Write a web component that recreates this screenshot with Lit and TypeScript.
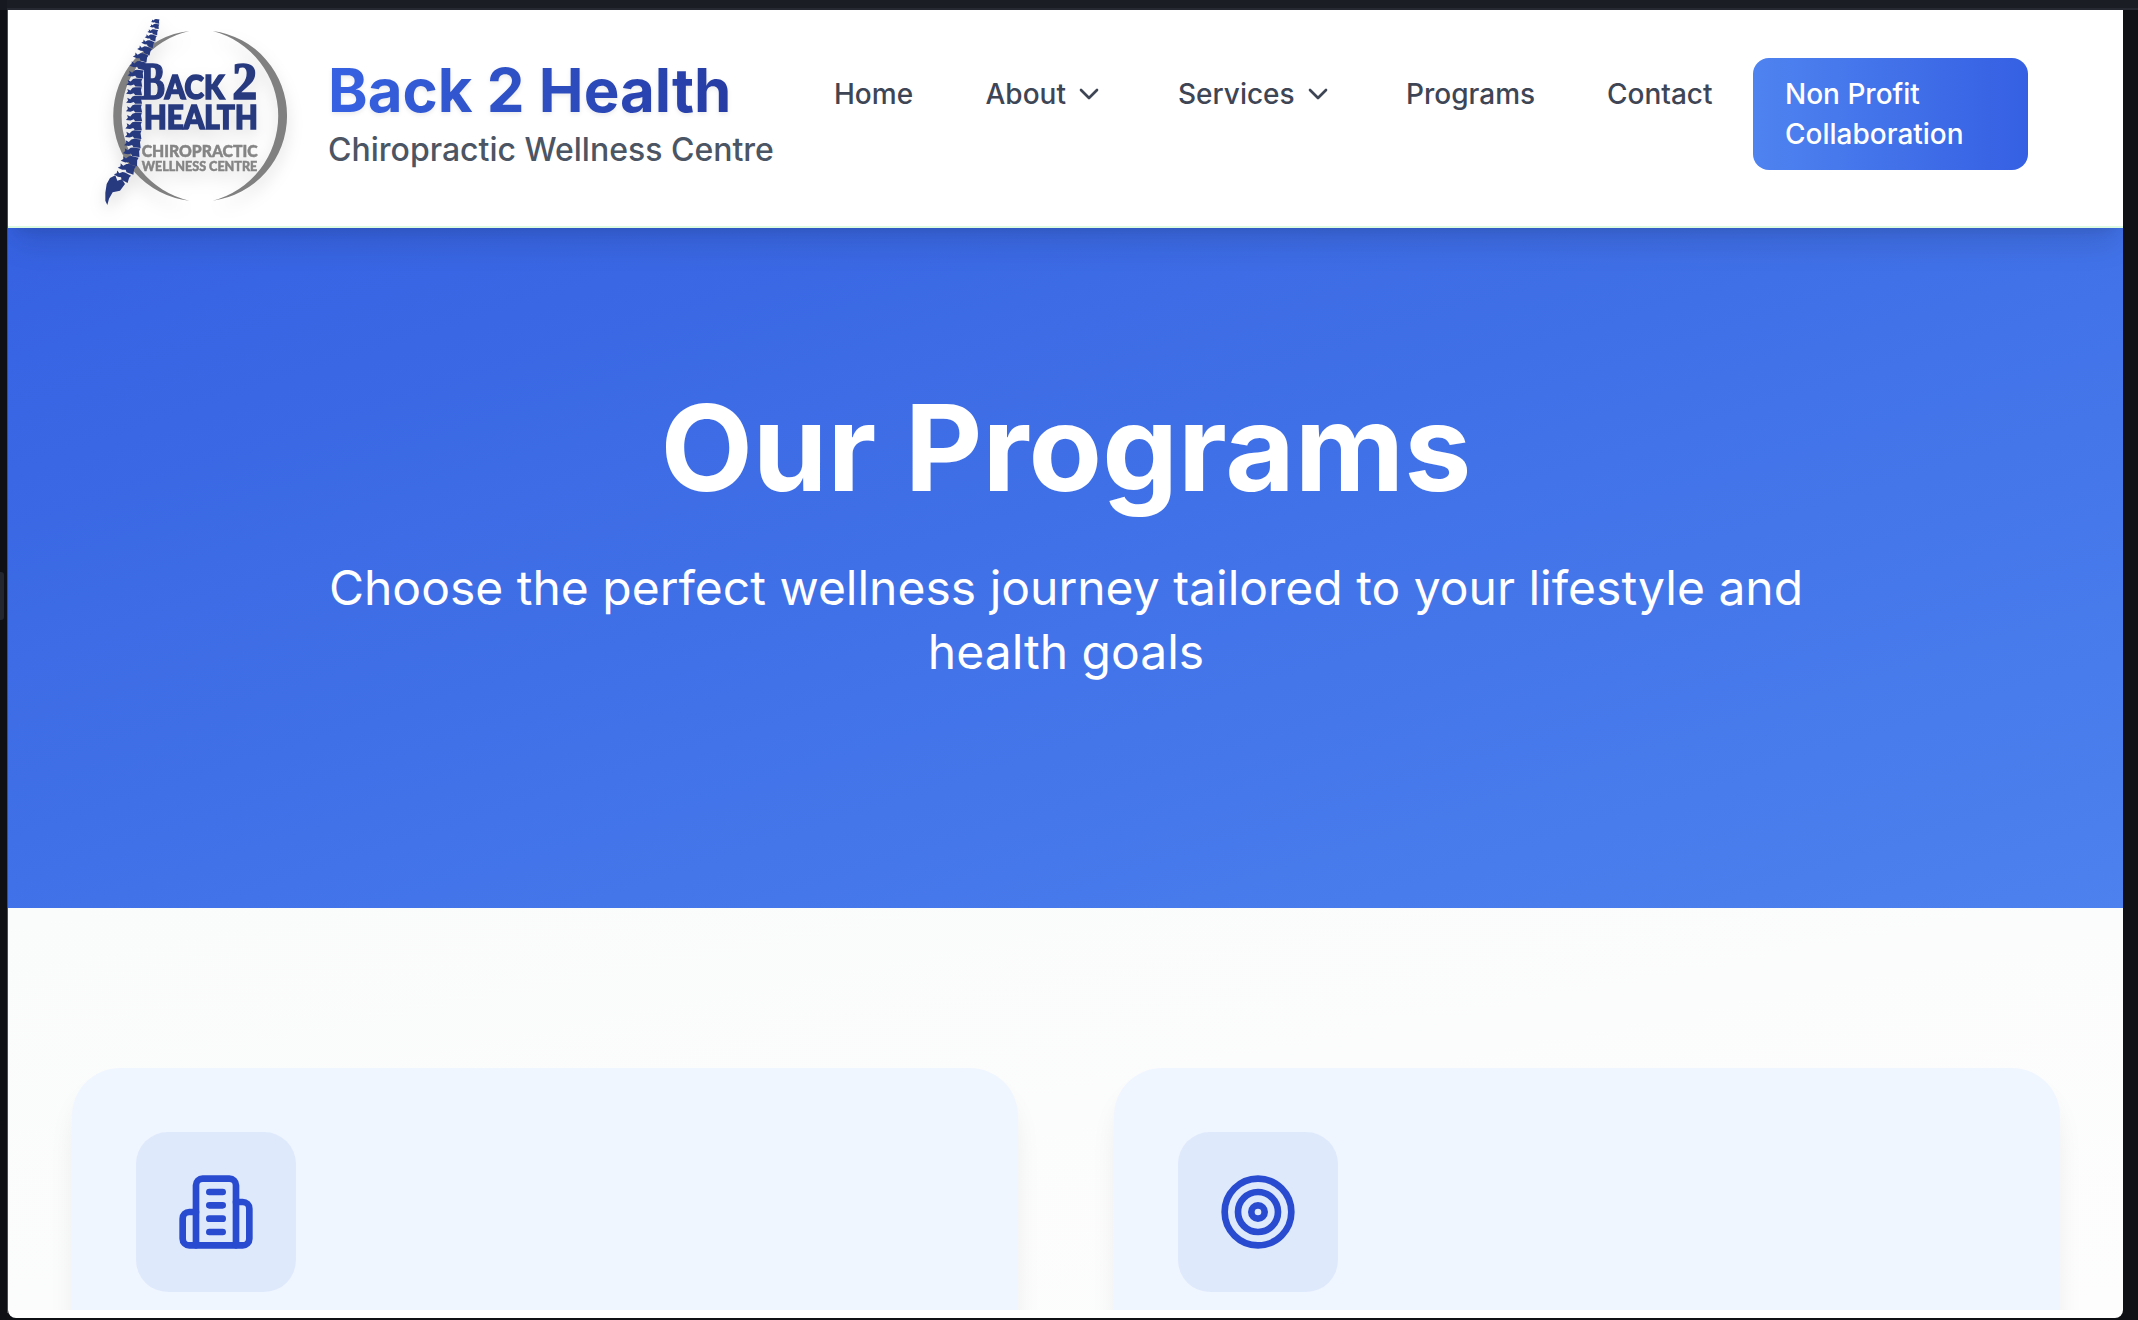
import { LitElement, html, css, svg } from "lit";
import { customElement } from "lit/decorators.js";

// x, y, rotation, scale of each vertebra, from the neck down
const vertebrae: [number, number, number, number][] = [
  [199, 64, 8, 0.6], [197, 79, 10, 0.66], [192, 96, 14, 0.74], [186, 113, 18, 0.82],
  [178, 131, 22, 0.9], [168, 151, 24, 1], [157, 172, 20, 1.06], [149, 196, 12, 1.12],
  [143, 222, 6, 1.14], [139, 248, 3, 1.14], [138, 274, 1, 1.14], [138, 300, 0, 1.14],
  [138, 326, 0, 1.16], [138, 352, 0, 1.16], [137, 378, 2, 1.18], [136, 404, 3, 1.18],
  [134, 430, 5, 1.2], [131, 456, 9, 1.22], [125, 482, 14, 1.22], [116, 506, 20, 1.22],
  [102, 530, 28, 1.15],
];

@customElement("brand-logo")
export class BrandLogo extends LitElement {
  static styles = css`
    :host { display: block; width: 220px; height: 216px; flex: none; }
    svg { display: block; filter: drop-shadow(0 8px 8px rgba(0, 0, 0, 0.13)); }
    .ring { fill: #808080; }
    .navy { fill: #27397f; }
    .letters { stroke: #27397f; stroke-width: 5; }
    .sans { font-family: Lato, sans-serif; font-weight: 900; }
    .serif { font-family: "Liberation Serif", serif; font-weight: 700; }
    .grey { fill: #858585; stroke: #858585; stroke-width: 1.5; }
  `;
  render() {
    return html`<svg width="220" height="216" viewBox="0 30 660 648">
      <path class="ring" d="M298 93A256 256 0 0 0 298 602A261 261 0 0 1 298 93Z" />
      <path class="ring" d="M368 93A256.7 256.7 0 0 1 368 602A263 263 0 0 0 368 93Z" />
      <g class="navy">
        ${vertebrae.map(
          ([x, y, r, s]) => svg`<path transform="translate(${x} ${y}) rotate(${r}) scale(${s})"
            d="M-9-9L-3-11L15-11L13-4L16 10L-2 10L-6 5L-14 8L-26 7L-21 1L-23-6L-15-2Z"/>`
        )}
        <path d="M46 578L50 552L60 534L76 526L82 542L96 538L105 552L90 572L68 577L57 596L52 615L46 602Z" />
      </g>
      <g class="navy letters">
        <text class="sans" y="297"><tspan class="serif" x="153" font-size="157" textLength="72" lengthAdjust="spacingAndGlyphs">B</tspan><tspan
          x="224" font-size="95" textLength="179" lengthAdjust="spacingAndGlyphs">ACK</tspan><tspan
          class="serif" x="427" font-size="158" textLength="75" lengthAdjust="spacingAndGlyphs">2</tspan></text>
        <text class="sans" x="162" y="387" font-size="96" textLength="341" lengthAdjust="spacingAndGlyphs">HEALTH</text>
      </g>
      <g class="grey sans">
        <text x="155" y="472" font-size="52" textLength="348" lengthAdjust="spacingAndGlyphs">CHIROPRACTIC</text>
        <text x="155" y="514" font-size="41" textLength="347" lengthAdjust="spacingAndGlyphs">WELLNESS CENTRE</text>
      </g>
    </svg>`;
  }
}

@customElement("site-header")
export class SiteHeader extends LitElement {
  static styles = css`
    :host {
      display: flex; box-sizing: border-box; height: 218px; padding-left: 82px;
      background: #fff; border-bottom: 2px solid #dcfbe0; position: relative;
      box-shadow: 0 20px 30px -6px rgba(0, 0, 0, 0.12), 0 8px 12px -8px rgba(0, 0, 0, 0.1);
    }
    .brand { width: 488px; margin-left: 18px; padding-top: 44px; flex: none; }
    .name {
      width: max-content; font-size: 60px; line-height: 72px; font-weight: 700;
      color: transparent; background: linear-gradient(to right, #3662e3, #263ca3);
      -webkit-background-clip: text; background-clip: text;
      filter: drop-shadow(0 2px 2px rgba(0, 0, 0, 0.08));
    }
    .tag { font-size: 32px; line-height: 48px; font-weight: 500; color: #4b5563; white-space: nowrap; }
    nav {
      display: flex; align-items: flex-start; margin-left: 18px; padding-top: 48px;
      font-size: 28px; line-height: 40px; font-weight: 500; color: #3e4554;
    }
    .link { display: flex; align-items: center; height: 40px; padding-top: 16px; flex: none; }
    .home { width: 151.5px; }
    .about { width: 192.5px; }
    .services { width: 228px; }
    .programs { width: 201px; }
    .contact { width: 146px; }
    .chevron { margin-left: 7px; }
    .cta {
      box-sizing: border-box; width: 275px; height: 112px; padding: 16px 32px;
      border-radius: 16px; color: #fff;
      background: linear-gradient(to right, #4f83f0, #3560e3);
    }
  `;
  chevron = () => html`<svg class="chevron" width="32" height="32" viewBox="0 0 24 24" fill="none"
    stroke="currentColor" stroke-width="2" stroke-linecap="round" stroke-linejoin="round"><path d="m6 9 6 6 6-6" /></svg>`;
  render() {
    return html`<brand-logo></brand-logo>
      <div class="brand">
        <div class="name">Back 2 Health</div>
        <div class="tag">Chiropractic Wellness Centre</div>
      </div>
      <nav>
        <a class="link home">Home</a>
        <a class="link about">About${this.chevron()}</a>
        <a class="link services">Services${this.chevron()}</a>
        <a class="link programs">Programs</a>
        <a class="link contact">Contact</a>
        <a class="cta">Non Profit<br />Collaboration</a>
      </nav>`;
  }
}

@customElement("app-root")
export class AppRoot extends LitElement {
  static styles = css`
    :host {
      display: flex; box-sizing: border-box; width: 2138px; height: 1320px; overflow: hidden;
      background: linear-gradient(#1b1d25 0 8px, #272932 8px 10px, #0f1117 10px);
      font-family: Inter, sans-serif;
    }
    .edge { width: 7px; padding-top: 572px; flex: none; background: linear-gradient(#171920 0 10px, #0f1016 10px); }
    .grip { width: 4px; height: 48px; background: #24262f; border-radius: 0 3px 3px 0; }
    .line { width: 1px; margin: 10px 0 7px; background: #4b4d54; flex: none; }
    .page {
      display: flex; flex-direction: column; width: 2115px; height: 1308px; margin-top: 10px;
      background: #fff; border-radius: 0 0 8px 8px; overflow: hidden;
    }
    site-header { z-index: 1; flex: none; }
    .hero {
      box-sizing: border-box; height: 680px; flex: none; padding: 160px 0 0 1px; text-align: center; color: #fff;
      background: linear-gradient(to bottom right, #3662e2, #4c81ee);
    }
    h1 { margin: 0; font-size: 120px; line-height: 120px; font-weight: 700; }
    .lead { margin: 48px auto 0; width: 1536px; font-size: 48px; line-height: 64px; font-weight: 400; }
    .programs {
      box-sizing: border-box; height: 402px; padding: 160px 63px 0 64px; overflow: hidden;
      display: grid; grid-template-columns: 1fr 1fr; gap: 96px;
      background: linear-gradient(to bottom right, #fafbfb, #fdfdfd);
    }
    .card {
      box-sizing: border-box; height: 700px; padding: 64px; border-radius: 48px; background: #f0f6ff;
      box-shadow: 0 20px 30px -6px rgba(0, 0, 0, 0.09), 0 8px 12px -8px rgba(0, 0, 0, 0.04);
    }
    .tile {
      display: flex; align-items: center; justify-content: center;
      width: 160px; height: 160px; border-radius: 32px; background: #dee9fc; color: #284bd0;
    }
  `;
  icon(content: unknown) {
    return html`<div class="card"><div class="tile">
      <svg width="80" height="80" viewBox="0 0 24 24" fill="none" stroke="currentColor"
        stroke-width="2" stroke-linecap="round" stroke-linejoin="round">${content}</svg>
    </div></div>`;
  }
  render() {
    return html`<div class="edge"><div class="grip"></div></div>
      <div class="line"></div>
      <div class="page">
        <site-header></site-header>
        <section class="hero">
          <h1>Our Programs</h1>
          <p class="lead">Choose the perfect wellness journey tailored to your lifestyle and health goals</p>
        </section>
        <section class="programs">
          ${this.icon(svg`<path d="M6 22V4a2 2 0 0 1 2-2h8a2 2 0 0 1 2 2v18Z"/><path d="M6 12H4a2 2 0 0 0-2 2v6a2 2 0 0 0 2 2h2"/><path d="M18 9h2a2 2 0 0 1 2 2v9a2 2 0 0 1-2 2h-2"/><path d="M10 6h4M10 10h4M10 14h4M10 18h4"/>`)}
          ${this.icon(svg`<circle cx="12" cy="12" r="10"/><circle cx="12" cy="12" r="6"/><circle cx="12" cy="12" r="2"/>`)}
        </section>
      </div>`;
  }
}
